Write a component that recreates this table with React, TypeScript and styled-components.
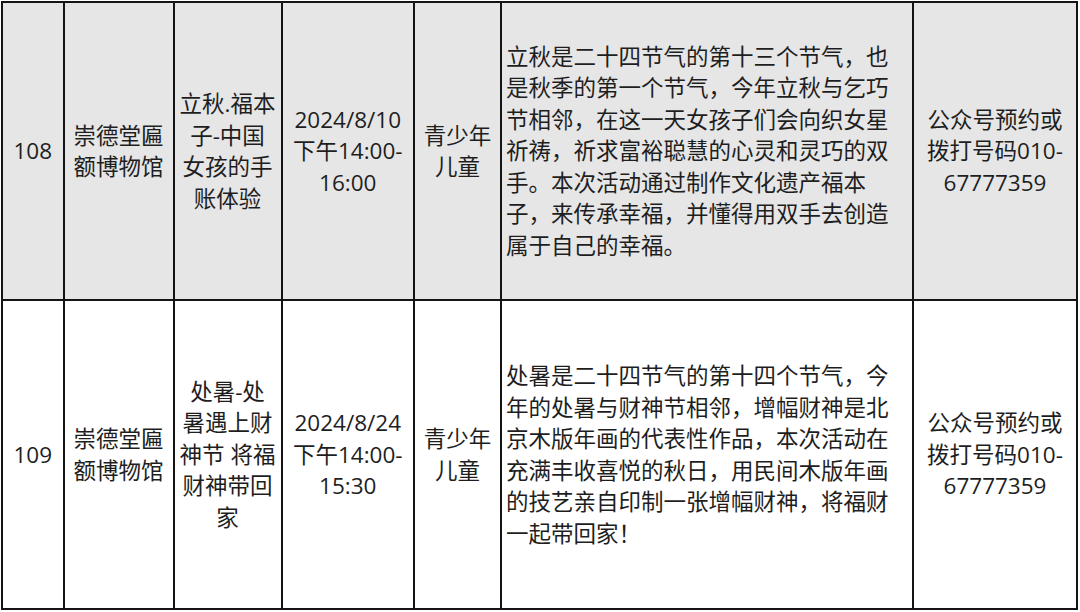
import React from 'react';
import styled, { createGlobalStyle } from 'styled-components';

const GlobalStyle = createGlobalStyle`
  html, body {
    margin: 0;
    padding: 0;
    background: #ffffff;
  }
  body {
    font-family: "Open Sans", "Noto Sans CJK SC", sans-serif;
    color: #1e1e1e;
  }
`;

type Row = {
  no: string;
  venue: string[];
  title: string[];
  time: string[];
  audience: string[];
  desc: string[];
  contact: string[];
};

const rows: Row[] = [
  {
    no: '108',
    venue: ['崇德堂匾', '额博物馆'],
    title: ['立秋.福本', '子-中国', '女孩的手', '账体验'],
    time: ['2024/8/10', '下午14:00-', '16:00'],
    audience: ['青少年', '儿童'],
    desc: [
      '立秋是二十四节气的第十三个节气，也',
      '是秋季的第一个节气，今年立秋与乞巧',
      '节相邻，在这一天女孩子们会向织女星',
      '祈祷，祈求富裕聪慧的心灵和灵巧的双',
      '手。本次活动通过制作文化遗产福本',
      '子，来传承幸福，并懂得用双手去创造',
      '属于自己的幸福。',
    ],
    contact: ['公众号预约或', '拨打号码010-', '67777359'],
  },
  {
    no: '109',
    venue: ['崇德堂匾', '额博物馆'],
    title: ['处暑-处', '暑遇上财', '神节 将福', '财神带回', '家'],
    time: ['2024/8/24', '下午14:00-', '15:30'],
    audience: ['青少年', '儿童'],
    desc: [
      '处暑是二十四节气的第十四个节气，今',
      '年的处暑与财神节相邻，增幅财神是北',
      '京木版年画的代表性作品，本次活动在',
      '充满丰收喜悦的秋日，用民间木版年画',
      '的技艺亲自印制一张增幅财神，将福财',
      '一起带回家！',
    ],
    contact: ['公众号预约或', '拨打号码010-', '67777359'],
  },
];

const widths = [61.5, 110, 108, 132.5, 87, 412, 164];

const Table = styled.table`
  margin: 1px 0 0 1px;
  width: 1077px;
  table-layout: fixed;
  border-collapse: collapse;
  font-size: 22.5px;
  line-height: 31.5px;
`;

const Tr = styled.tr<{ $shade: boolean; $h: number }>`
  height: ${(p) => p.$h}px;
  background: ${(p) => (p.$shade ? '#e6e6e6' : '#ffffff')};
`;

const Td = styled.td<{ $left?: boolean }>`
  border: 2px solid #141414;
  padding: ${(p) => (p.$left ? '0 0 0 4px' : '0')};
  text-align: ${(p) => (p.$left ? 'left' : 'center')};
  vertical-align: middle;
`;

const Line = styled.span`
  display: block;
  white-space: nowrap;
`;

const Lines = ({ items }: { items: string[] }) => (
  <>
    {items.map((t, i) => (
      <Line key={i}>{t}</Line>
    ))}
  </>
);

export default function App() {
  return (
    <>
      <GlobalStyle />
      <Table>
        <colgroup>
          {widths.map((w, i) => (
            <col key={i} style={{ width: w }} />
          ))}
        </colgroup>
        <tbody>
          {rows.map((r, i) => (
            <Tr key={r.no} $shade={i === 0} $h={i === 0 ? 298 : 309}>
              <Td>{r.no}</Td>
              <Td><Lines items={r.venue} /></Td>
              <Td><Lines items={r.title} /></Td>
              <Td><Lines items={r.time} /></Td>
              <Td><Lines items={r.audience} /></Td>
              <Td $left><Lines items={r.desc} /></Td>
              <Td><Lines items={r.contact} /></Td>
            </Tr>
          ))}
        </tbody>
      </Table>
    </>
  );
}
